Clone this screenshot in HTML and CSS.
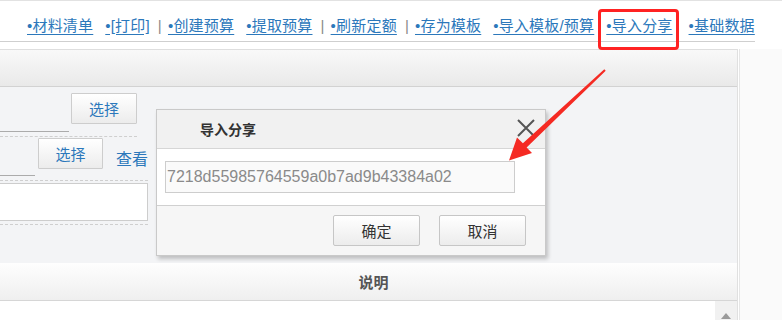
FILE: index.html
```html
<!DOCTYPE html>
<html lang="zh-CN">
<head>
<meta charset="utf-8">
<title>导入分享</title>
<link rel="stylesheet" href="styles.css">
</head>
<body>
<header class="top">
  <nav class="toolbar">
    <a class="lnk">•材料清单</a>
    <a class="lnk">•[打印]</a>
    <span class="sep">|</span>
    <a class="lnk">•创建预算</a>
    <a class="lnk">•提取预算</a>
    <span class="sep">|</span>
    <a class="lnk">•刷新定额</a>
    <span class="sep">|</span>
    <a class="lnk">•存为模板</a>
    <a class="lnk">•导入模板/预算</a>
    <a class="lnk">•导入分享</a>
    <a class="lnk last">•基础数据</a>
  </nav>
</header>
<div class="main">
  <section class="panel">
    <div class="panel-head"></div>
    <div class="panel-body">
      <div class="form">
        <div class="row r1"><span class="field f1"></span><button class="btn">选择</button></div>
        <div class="row r2"><span class="field f2"></span><button class="btn">选择</button><a class="view">查看</a></div>
        <div class="row r3"><div class="textarea"></div></div>
      </div>
    </div>
    <div class="grid-head">说明</div>
    <div class="grid-body"><div class="scroll"><span class="up"></span></div></div>
  </section>
  <aside class="side"></aside>
</div>

<div class="dialog">
  <div class="dlg-title">
    <span class="dlg-name">导入分享</span>
    <svg class="close" width="18" height="18" viewBox="0 0 18 18"><path d="M1 1L17 17M17 1L1 17" stroke="#555" stroke-width="2" fill="none"/></svg>
  </div>
  <div class="dlg-body">
    <div class="code">7218d55985764559a0b7ad9b43384a02</div>
  </div>
  <div class="dlg-foot">
    <button class="dbtn">确定</button>
    <button class="dbtn">取消</button>
  </div>
</div>

<div class="mark"></div>
<svg class="arrow" width="782" height="320" viewBox="0 0 782 320">
  <polygon points="604.3,69.2 605.7,70.8 526.6,147.4 532,153 509,160.5 517,137.6 522.9,143.3" fill="#f52a23"/>
</svg>
</body>
</html>
```

FILE: styles.css
```css
* { box-sizing: border-box; }
html, body { margin: 0; padding: 0; }
body {
  width: 782px;
  height: 320px;
  overflow: hidden;
  background: #ffffff;
  font-family: "Noto Sans CJK SC", "Noto Sans", sans-serif;
  position: relative;
}
.top {
  border-top: 1px solid #e2e2e2;
}
.toolbar {
  width: 755px;
  height: 41px;
  border-bottom: 1px solid #cfcfcf;
  display: flex;
  align-items: center;
  padding: 9px 0 0 27px;
  font-family: "Liberation Sans", "Noto Sans CJK SC", sans-serif;
  font-size: 15px;
  line-height: 22px;
  letter-spacing: 0.2px;
}
.lnk {
  color: #2c78bb;
  text-decoration: underline;
  text-underline-offset: 3px;
  margin-right: 12px;
  white-space: nowrap;
  cursor: pointer;
}
.lnk.last { margin-left: 4px; margin-right: 0; }
.sep {
  color: #8a8a8a;
  margin: 0 6px 0 -4px;
}
.main {
  margin-top: 7px;
  display: flex;
  height: 272px;
}
.panel {
  width: 738px;
  border-top: 1px solid #dedede;
  border-right: 1px solid #e0e0e0;
  display: flex;
  flex-direction: column;
}
.panel-head {
  height: 37px;
  background: linear-gradient(#f9f9f9, #e9e9e9);
  border-bottom: 1px solid #d2d2d2;
}
.panel-body {
  height: 176px;
  background: #f3f4f6;
}
.form { width: 150px; }
.row {
  display: flex;
  align-items: flex-start;
  border-bottom: 1px dashed #cfcfcf;
}
.r1 { height: 50px; width: 137px; }
.r2 { height: 44px; width: 148px; }
.r3 { height: 44px; width: 148px; }
.field { display: block; flex-shrink: 0; border-bottom: 1px solid #ababab; }
.f1 { width: 69px; height: 45px; }
.f2 { width: 35px; height: 39px; }
.btn {
  flex-shrink: 0;
  width: 66px;
  height: 31px;
  border: 1px solid #cdcdcd;
  background: linear-gradient(#ffffff, #ececec);
  color: #2c78bb;
  font-family: "Noto Sans CJK SC", sans-serif;
  font-size: 15px;
  padding: 0;
  border-radius: 1px;
}
.r1 .btn { margin: 6px 0 0 2px; }
.r2 .btn { margin: 1px 0 0 3px; width: 65px; }
.view {
  flex-shrink: 0;
  white-space: nowrap;
  color: #2c78bb;
  font-size: 16px;
  margin: 11px 0 0 13px;
  line-height: 20px;
}
.textarea {
  width: 148px;
  height: 38px;
  margin-top: 2px;
  background: #fff;
  border: 1px solid #cdcdcd;
  border-left: none;
}
.grid-head {
  height: 38px;
  background: linear-gradient(#fefefe, #efefef);
  border-bottom: 1px solid #d6d6d6;
  font-size: 15px;
  color: #555;
  font-weight: bold;
  text-align: center;
  line-height: 37px;
  padding-left: 10px;
}
.grid-body {
  flex: 1;
  background: #fff;
  display: flex;
  justify-content: flex-end;
}
.scroll {
  width: 22px;
  background: #f1f1f1;
  display: flex;
  justify-content: center;
  padding-top: 12px;
}
.up {
  width: 0;
  height: 0;
  border-left: 5px solid transparent;
  border-right: 5px solid transparent;
  border-bottom: 6px solid #9a9a9a;
}
.side {
  flex: 1;
  margin-left: 1px;
  background: #fafafa;
  border-left: 1px solid #e6e6e6;
}
.dialog {
  position: absolute;
  left: 156px;
  top: 109px;
  width: 390px;
  height: 147px;
  background: #fff;
  border: 1px solid #c9c9c9;
  box-shadow: 2px 3px 4px rgba(0, 0, 0, 0.22);
  display: flex;
  flex-direction: column;
}
.dlg-title {
  height: 39px;
  background: #f1f1f1;
  border-bottom: 1px solid #d6d6d6;
  display: flex;
  align-items: center;
  justify-content: space-between;
  padding: 0 10px 0 43px;
}
.dlg-name {
  font-size: 14px;
  font-weight: bold;
  color: #333;
}
.close { margin-top: -2px; }
.dlg-body {
  height: 57px;
  padding: 12px 0 0 8px;
  border-bottom: 1px solid #d0d0d0;
}
.code {
  width: 350px;
  height: 32px;
  border: 1px solid #cdcdcd;
  background: #fafafa;
  color: #8a8a8a;
  font-family: "Liberation Sans", Arial, sans-serif;
  font-size: 16px;
  line-height: 30px;
  padding-left: 1px;
}
.dlg-foot {
  flex: 1;
  background: #f6f6f6;
  display: flex;
  justify-content: flex-end;
  align-items: flex-start;
  gap: 19px;
  padding: 9px 19px 0 0;
}
.dbtn {
  width: 87px;
  height: 31px;
  border: 1px solid #c6c6c6;
  border-radius: 2px;
  background: linear-gradient(#ffffff, #ececec);
  color: #333;
  font-family: "Noto Sans CJK SC", sans-serif;
  font-size: 15px;
  padding: 0;
}
.mark {
  position: absolute;
  left: 598px;
  top: 9px;
  width: 81px;
  height: 41px;
  border: 3px solid #ff2222;
  border-radius: 4px;
}
.arrow {
  position: absolute;
  left: 0;
  top: 0;
  pointer-events: none;
}
```
